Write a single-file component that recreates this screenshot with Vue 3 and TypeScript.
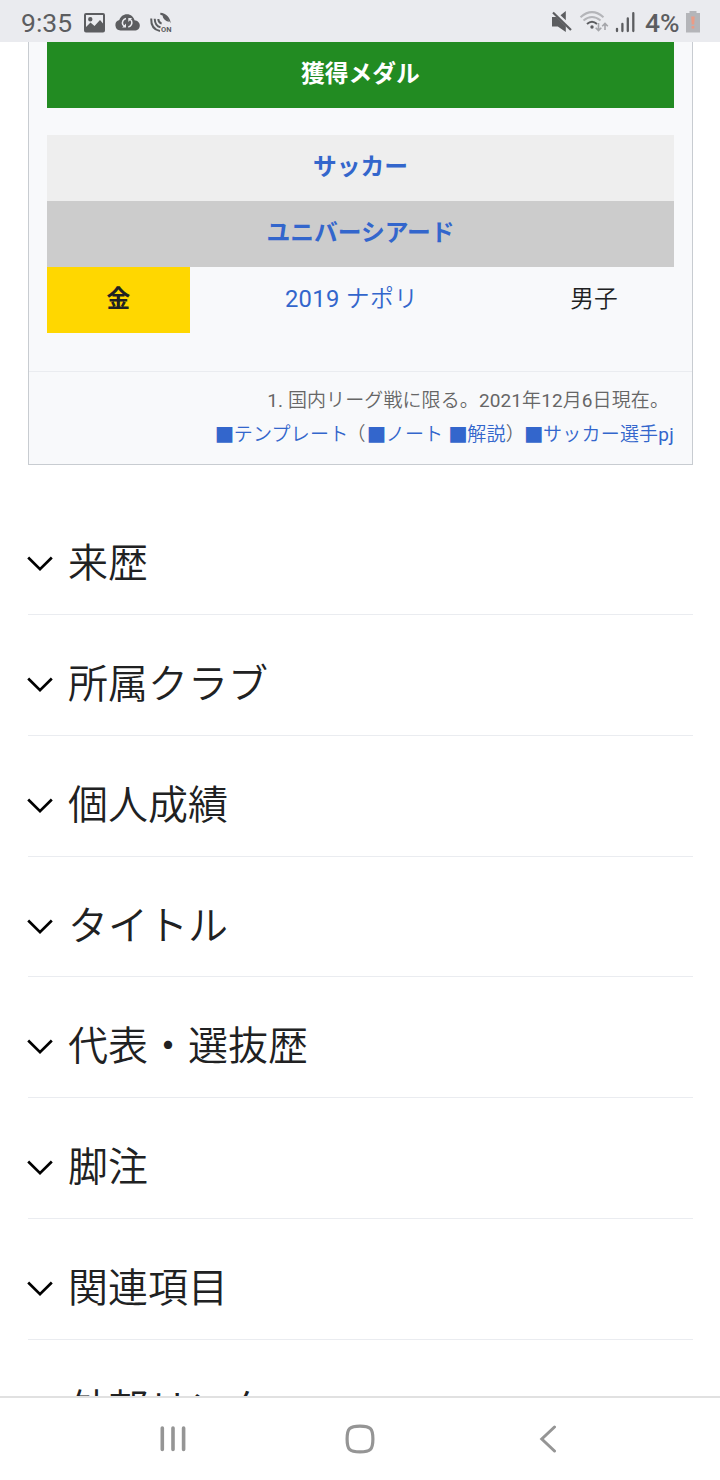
<script setup lang="ts">
interface Section {
  id: string
  title: string
}

const sections: Section[] = [
  { id: 'history', title: '来歴' },
  { id: 'clubs', title: '所属クラブ' },
  { id: 'stats', title: '個人成績' },
  { id: 'titles', title: 'タイトル' },
  { id: 'national', title: '代表・選抜歴' },
  { id: 'notes', title: '脚注' },
  { id: 'related', title: '関連項目' },
  { id: 'links', title: '外部リンク' },
]
</script>

<template>
  <div class="screen">
    <header class="status">
      <div class="status-left">
        <span class="time">9:35</span>
        <svg class="ic-picture" width="22" height="20" viewBox="84 13 22 20">
          <path fill="#5c5d60" fill-rule="evenodd" d="M86 13H103Q105 13 105 15V30.500Q105 32.500 103 32.500H86Q84 32.500 84 30.500V15Q84 13 86 13ZM86 15V27L90.500 22.500L94.500 26L100 20L103 23.500V15ZM90.300 17A2.200 2.200 0 1 1 90.300 21.400A2.200 2.200 0 1 1 90.300 17Z" />
        </svg>
        <svg class="ic-cloud" width="26" height="20" viewBox="115 13 26 20">
          <path fill="#5c5d60" d="M120.500 30.500A5.300 5.300 0 0 1 119.300 20.100C120.500 16.500 123.300 14.200 127 14.200C130.800 14.200 133.800 16.800 134.500 20.300C137.600 20.600 139.800 22.700 139.800 25.400C139.800 28.300 137.600 30.500 134.500 30.500Z" />
          <path fill="none" stroke="#eaebef" stroke-width="1.500" d="M126 18.600C123 19.200 121.800 22 122.800 24.700L124.300 26.300M128.300 26.900C131.300 26.300 132.500 23.500 131.500 20.800L130 19.200" />
          <path fill="#eaebef" d="M126 23.400V27.400H122.200ZM128.300 22V18H132.100Z" />
        </svg>
        <svg class="ic-dish" width="24" height="22" viewBox="149 12 24 22">
          <g fill="none" stroke="#5c5d60" stroke-width="2">
            <path d="M151.200 18.500C151 25 153.500 29.800 160 31" />
            <path d="M154.700 18.800C154.900 23.500 156.500 26.500 160.500 27.300" />
            <path d="M158.300 19C158.400 21.300 159.300 22.900 161.600 23.600" />
          </g>
          <path fill="#5c5d60" d="M160.300 12.700C166 13 170.300 17.300 170.700 23.200C168.700 19.800 164.300 15.900 160.300 14.800ZM162.800 15.800C165.500 17 168 19.300 169.500 21.800C166.500 22 162.300 18.500 162.800 15.800Z" />
          <text class="on-label" x="161" y="32">ON</text>
        </svg>
      </div>
      <div class="status-right">
        <svg class="ic-mute" width="22" height="24" viewBox="551 10 22 24">
          <path fill="#5c5d60" d="M552 17H556.500L565.800 26.200V32L557.800 26.500H552ZM560.500 15.200L565.800 11V20.200Z" />
          <path stroke="#5c5d60" stroke-width="2.200" d="M553 12.500L571 30" />
        </svg>
        <svg class="ic-wifi" width="30" height="24" viewBox="579 10 30 24">
          <g fill="none" stroke-width="2">
            <path stroke="#b4b5b9" d="M580.500 17.200Q592 7 603.500 17.200M583.500 20.500Q592 13.500 600.500 20.500" />
            <path stroke="#5c5d60" d="M587 24Q592 19.500 597 24" />
            <path stroke="#a5a6aa" stroke-width="1.600" d="M598.500 23V30.500M595.700 27.800L598.500 30.600L601.300 27.800M605 30V23.500M602.200 26.300L605 23.500L607.800 26.300" />
          </g>
          <circle cx="592" cy="27" r="1.700" fill="#5c5d60" />
        </svg>
        <svg class="ic-signal" width="20" height="22" viewBox="615 12 20 22">
          <path stroke="#5c5d60" stroke-width="2.300" stroke-linecap="round" d="M617 28.800V31M622.400 24V31M627.800 18.500V31M633.300 13.200V31" />
        </svg>
        <span class="percent">4%</span>
        <svg class="ic-battery" width="16" height="24" viewBox="685 10 16 24">
          <path fill="#b4b5b9" d="M689.500 11H696.500V13H700V32.500H686V13H689.500Z" />
          <path fill="#eb9c86" d="M691.200 16.500H694.700L694.200 24.500H691.700ZM691.600 26H694.300V28.500H691.600Z" />
        </svg>
      </div>
    </header>

    <main class="page">
      <section class="infobox">
        <div class="medals">
          <div class="bar bar-green">獲得メダル</div>
          <div class="bar bar-light"><a>サッカー</a></div>
          <div class="bar bar-gray"><a>ユニバーシアード</a></div>
          <div class="medal-row">
            <div class="gold">金</div>
            <div class="event"><a><b>2019</b> ナポリ</a></div>
            <div class="gender">男子</div>
          </div>
        </div>
        <div class="foot">
          <div class="foot-line foot-note"><span><b>1. </b>国内リーグ戦に限る。<b>2021</b>年<b>12</b>月<b>6</b>日現在。</span></div>
          <div class="foot-line">
            <a><i class="sq">■</i>テンプレート</a><span class="open">（</span><a><i class="sq">■</i>ノート</a><a class="spaced"><i class="sq">■</i>解説</a><span>）</span><a><i class="sq">■</i>サッカー選手<b>pj</b></a>
          </div>
        </div>
      </section>

      <section v-for="s in sections" :key="s.id" class="section">
        <svg class="chevron" width="26" height="16" viewBox="0 0 26 16">
          <path fill="none" stroke="#000" stroke-width="2.700" d="M1.200 1.500L13 13.200L24.800 1.500" />
        </svg>
        <h2>{{ s.title }}</h2>
      </section>
    </main>

    <nav class="navbar">
      <svg width="28" height="28" viewBox="0 0 28 28">
        <path stroke="#959595" stroke-width="3.600" stroke-linecap="round" d="M3.300 3V24.400M14 3V24.400M24.600 3V24.400" />
      </svg>
      <svg class="nav-home" width="30" height="30" viewBox="0 0 30 30">
        <path fill="none" stroke="#959595" stroke-width="3.200" d="M15 2.100C25.500 2.100 27.900 4.500 27.900 15C27.900 25.500 25.500 27.900 15 27.900C4.500 27.900 2.100 25.500 2.100 15C2.100 4.500 4.500 2.100 15 2.100Z" />
      </svg>
      <svg width="18" height="28" viewBox="0 0 18 28">
        <path fill="none" stroke="#959595" stroke-width="3" stroke-linecap="round" d="M15.500 2L2.800 14L15.500 26" />
      </svg>
    </nav>
  </div>
</template>

<style>
body {
  margin: 0;
  background: #fff;
}
</style>

<style scoped>
.screen {
  width: 720px;
  height: 1480px;
  display: flex;
  flex-direction: column;
  overflow: hidden;
  background: #fff;
  color: #202122;
  font-family: Roboto, "Noto Sans CJK JP", sans-serif;
}

.status {
  flex: none;
  height: 42px;
  box-sizing: border-box;
  padding: 0 19px 0 21px;
  display: flex;
  justify-content: space-between;
  background: #eaebef;
  color: #5c5d60;
}

.status-left,
.status-right {
  display: flex;
  align-items: flex-start;
}

.status svg {
  flex: none;
}

.time {
  width: 63px;
  font-size: 26.5px;
  line-height: 45px;
}

.ic-picture { margin-top: 13px; }
.ic-cloud { margin: 13px 0 0 9px; }
.ic-dish { margin: 12px 0 0 8px; }
.ic-mute { margin: 10px 6px 0 0; }
.ic-wifi { margin: 10px 6px 0 0; }
.ic-signal { margin-top: 12px; }
.ic-battery { margin-top: 10px; }

.on-label {
  font: bold 7.5px Roboto, sans-serif;
  fill: #5c5d60;
}

.percent {
  width: 40px;
  margin-left: 10px;
  font-size: 26.5px;
  font-weight: 500;
  line-height: 45px;
}

.page {
  flex: 1;
  min-height: 0;
  overflow: hidden;
  padding: 0 27px 0 28px;
}

.infobox {
  height: 423px;
  box-sizing: border-box;
  border: 1px solid #c8ccd1;
  border-top: 0;
  background: #f8f9fb;
  margin-bottom: 29.2px;
}

.medals {
  height: 329px;
  padding: 0 18px;
}

.bar {
  height: 66px;
  line-height: 65px;
  font-size: 23.75px;
  font-weight: 700;
  text-align: center;
}

.bar-green {
  background: #228b22;
  color: #fff;
  margin-bottom: 27px;
}

.bar-light { background: #eee; }
.bar-gray { background: #ccc; }

a { color: #36c; }

b { font-weight: 400; }

.medal-row {
  display: grid;
  grid-template-columns: 143px 323px 161px;
  height: 66px;
  line-height: 65px;
  font-size: 23.75px;
  font-weight: 350;
  text-align: center;
}

.gold {
  background: #ffd700;
  font-weight: 700;
}

.event { letter-spacing: 0.35px; }

.gender { padding-left: 1px; }

.foot {
  height: 93px;
  box-sizing: border-box;
  border-top: 1px solid #eaecf0;
  padding: 11px 18px 0;
  font-size: 19px;
  font-weight: 350;
  letter-spacing: 0.22px;
  color: #666;
}

.foot-line {
  height: 34px;
  line-height: 35px;
  display: flex;
  justify-content: flex-end;
  white-space: nowrap;
}

.foot-note {
  padding-right: 5px;
  letter-spacing: 0.1px;
}

.foot-note b { white-space: pre; }

.sq {
  display: inline-block;
  width: 18px;
  font: normal 20.5px/20px "DejaVu Sans", sans-serif;
  text-indent: -1px;
  transform: translateY(-1px);
}

.open { margin: 0 2px 0 -2px; }
.spaced { margin-left: 6px; }

.section {
  height: 120.8px;
  box-sizing: border-box;
  border-bottom: 1px solid #eaecf0;
  display: flex;
  padding-top: 40px;
}

.chevron {
  flex: none;
  margin: 22px 15px 0 -1px;
}

h2 {
  margin: 0;
  font-size: 40px;
  font-weight: 350;
  line-height: 60px;
}

.navbar {
  flex: none;
  height: 84px;
  box-sizing: border-box;
  border-top: 2px solid #e1e1e1;
  padding: 0 163px 0 159px;
  display: flex;
  justify-content: space-between;
  align-items: center;
  background: #fff;
}

.nav-home { margin-right: 6px; }
</style>
